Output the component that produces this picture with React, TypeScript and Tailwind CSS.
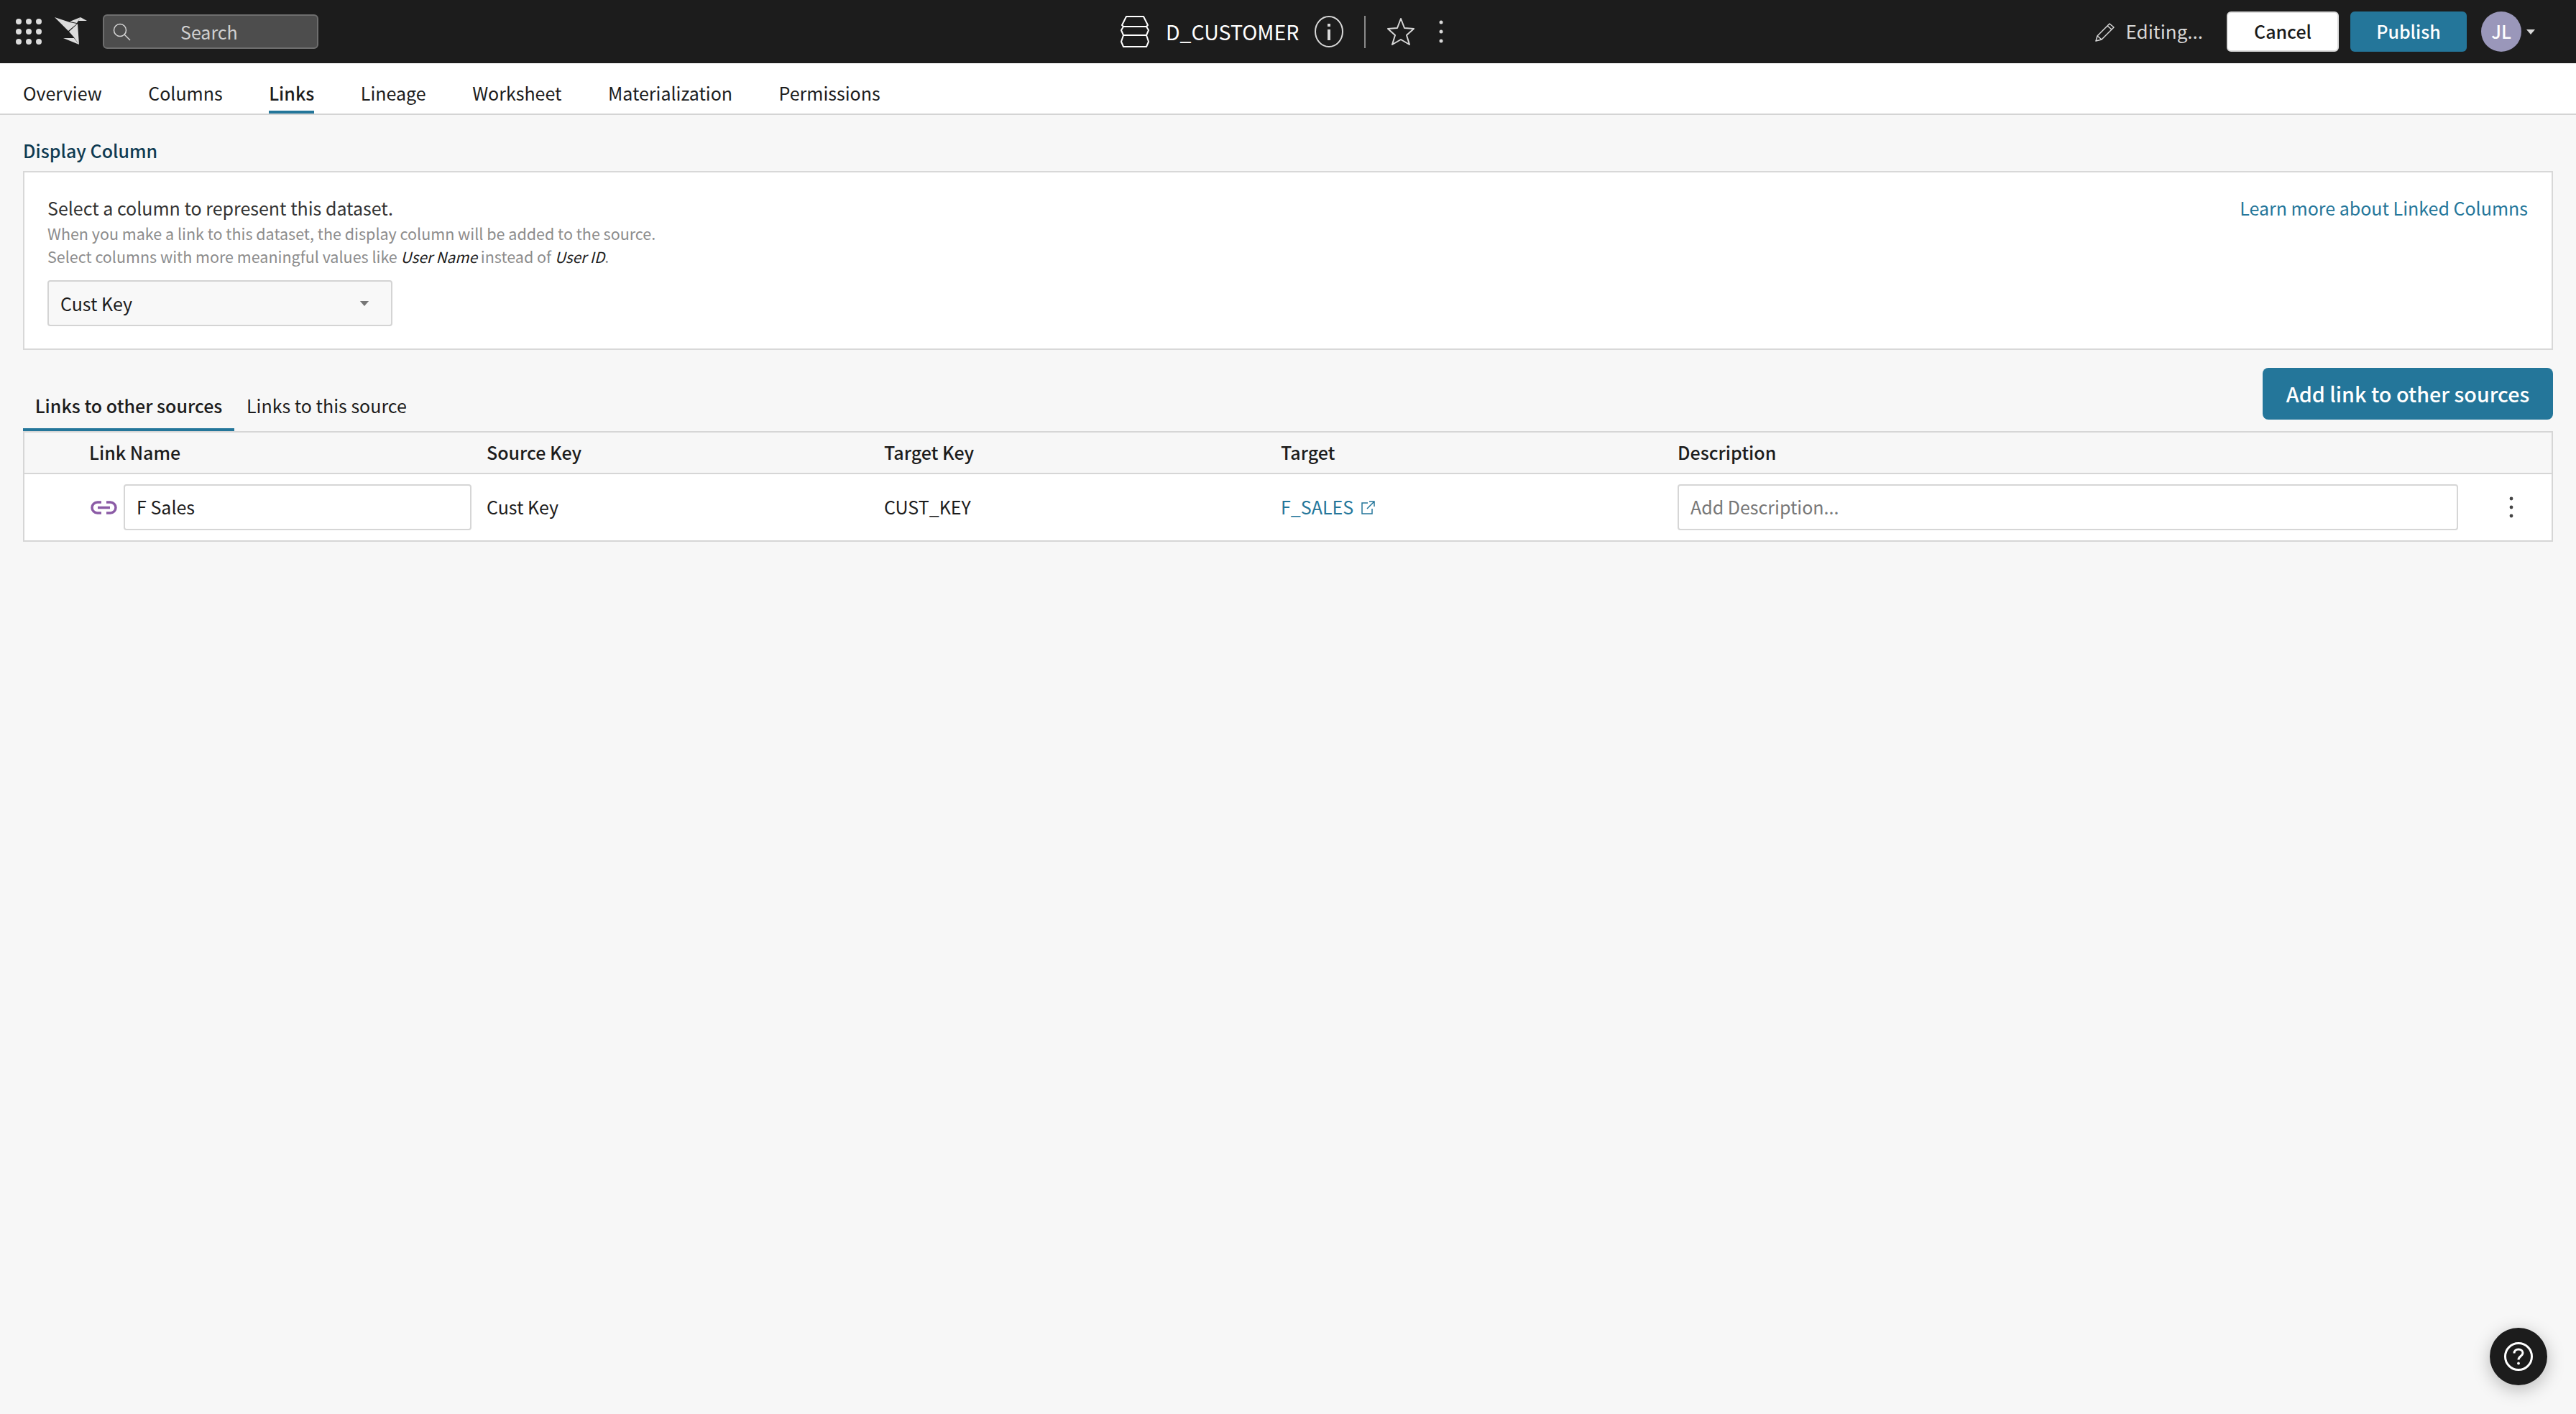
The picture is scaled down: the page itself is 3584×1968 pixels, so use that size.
import React from "react";

const Caret = ({ className }: { className: string }) => (
  <svg className={className} viewBox="0 0 14 8" width="14" height="8"><path d="M0 0h14L7 8z" fill="currentColor" /></svg>
);

const tabs = ["Overview", "Columns", "Links", "Lineage", "Worksheet", "Materialization", "Permissions"];

function TopBar() {
  return (
    <header className="relative flex h-[88px] shrink-0 items-center justify-between bg-[#1c1c1c]">
      <div className="flex items-center">
        <svg className="ml-[22px]" width="36" height="36" viewBox="0 0 36 36" fill="#dcdcdc">
          {[4, 18, 32].map((y) => [4, 18, 32].map((x) => <circle key={`${x}-${y}`} cx={x} cy={y} r="4" />))}
        </svg>
        <svg className="ml-[18px]" width="46" height="40" viewBox="0 0 46 40" fill="#dcdcdc">
          <path d="M0 0 21 7 31 9 19 19Z" />
          <path d="M21 6 36 0 31 8Z" />
          <path d="M36 0 45 5 33 5Z" />
          <path d="M20 20 32 9 34 38 27 28Z" />
          <path d="M12 29 27 29 34 38Z" />
        </svg>
        <div className="ml-[21px] flex h-[48px] w-[300px] items-center rounded-md border-2 border-[#6e6e6e] bg-[#4d4d4d] pl-3">
          <svg width="25" height="25" viewBox="0 0 25 25" fill="none" stroke="#d6d6d6" strokeWidth="1.5"><circle cx="10" cy="10" r="8.5" /><path d="m16 16 8 8" /></svg>
          <span className="ml-[69px] text-[25px] leading-none text-[#d0d0d0]">Search</span>
        </div>
      </div>
      <div className="absolute left-[1559px] top-0 flex h-[88px] items-center">
        <svg width="40" height="44" viewBox="0 0 40 44" fill="none" stroke="#fff" strokeWidth="2">
          <path d="M8 1h24l6 12-2 2H4l-2-2zM4 15l-3 5 3 7h32l3-7-3-5M4 27l-3 9 3 7h32l3-7-3-9" strokeLinejoin="round" />
        </svg>
        <span className="ml-[23px] text-[28.500px] leading-none text-white">D_CUSTOMER</span>
        <svg className="ml-[22px]" width="40" height="44" viewBox="0 0 40 44" fill="none"><ellipse cx="20" cy="22" rx="19" ry="21" stroke="#d8d8d8" strokeWidth="2" /><rect x="18" y="19" width="4" height="15" fill="#d8d8d8" /><rect x="18" y="11" width="4" height="4" fill="#d8d8d8" /></svg>
        <div className="ml-[29px] h-[45px] w-[2px] bg-[#8a8a8a]" />
        <svg className="ml-[30px]" width="38" height="40" viewBox="0 0 38 40" fill="none" stroke="#d8d8d8" strokeWidth="2"><path d="M19 2l5 13 13 1-10 9 4 13-12-7-12 7 4-13L1 16l13-1z" strokeLinejoin="round" /></svg>
        <svg className="ml-[33px]" width="8" height="36" viewBox="0 0 8 36" fill="#d8d8d8"><circle cx="4" cy="5" r="2.5" /><circle cx="4" cy="18" r="2.5" /><circle cx="4" cy="31" r="2.5" /></svg>
      </div>
      <div className="flex items-center pr-[57px]">
        <svg width="28" height="27" viewBox="0 0 28 27" fill="none" stroke="#d8d8d8" strokeWidth="1.5"><path d="M1 26l2-7L20 2l6 5-17 17zM3 19l6 5M17 5l6 5" strokeLinejoin="round" /></svg>
        <span className="mb-[2px] ml-[15px] text-[26px] leading-none text-[#d8d8d8]">Editing...</span>
        <button className="ml-[33px] h-[56px] w-[156px] rounded-md border-2 border-[#dcdcdc] bg-white text-[25px] font-medium text-[#1c1c1c]">Cancel</button>
        <button className="ml-4 h-[56px] w-[162px] rounded-md bg-[#24769a] text-[25px] font-medium text-white">Publish</button>
        <div className="ml-5 flex h-[56px] w-[56px] items-center justify-center rounded-full bg-[#9a97ba] text-[25px] font-medium text-white">JL</div>
        <Caret className="ml-[7px] h-[7px] w-3 text-[#d8d8d8]" />
      </div>
    </header>
  );
}

function Cell({ w, children, className = "" }: { w: string; children: React.ReactNode; className?: string }) {
  return <div className={`${w} flex shrink-0 items-center ${className}`}>{children}</div>;
}

export default function App() {
  return (
    <div className="relative flex h-[1968px] w-[3584px] flex-col overflow-hidden bg-[#f7f7f7] text-[25px] text-[#1c1c1c] [font-family:'Noto_Sans_CJK_JP','Noto_Sans',sans-serif]">
      <TopBar />
      <nav className="flex h-[72px] shrink-0 items-stretch gap-[64.500px] border-b-2 border-[#d4d4d4] bg-white px-8">
        {tabs.map((t) => (
          <div key={t} className={`flex items-center border-b-4 pt-4 leading-none ${t === "Links" ? "border-[#24769a] font-medium" : "border-transparent"}`}>{t}</div>
        ))}
      </nav>

      <main className="flex flex-col px-8">
        <h2 className="mt-[30px] h-[48px] font-medium leading-[38px] text-[#0f3b52]">Display Column</h2>
        <section className="flex h-[249px] justify-between border-2 border-[#d8d8d8] bg-white pl-8 pr-[33px]">
          <div className="flex flex-col">
            <p className="mt-[31px] leading-[36px] text-[#333]">Select a column to represent this dataset.</p>
            <p className="mt-[2px] text-[21.500px] leading-[32px] text-[#8c8c8c]">When you make a link to this dataset, the display column will be added to the source.</p>
            <p className="text-[21.500px] leading-[32px] text-[#8c8c8c]">
              Select columns with more meaningful values like <em className="text-[20.800px] text-[#1c1c1c]">User Name</em> instead of <em className="text-[20.800px] text-[#1c1c1c]">User ID</em>.
            </p>
            <div className="mt-[17px] flex h-[64px] w-[480px] items-center justify-between rounded border-2 border-[#d4d4d4] bg-[#f8f8f8] pl-4 pr-[30px]">
              <span className="leading-none">Cust Key</span>
              <Caret className="h-[7px] w-[14px] text-[#777]" />
            </div>
          </div>
          <a className="mt-[31px] leading-[36px] text-[#24769a]">Learn more about Linked Columns</a>
        </section>

        <div className="mt-[25px] flex h-[88px] items-start justify-between">
          <div className="flex h-[88px] items-stretch">
            <div className="flex w-[294px] items-center justify-center border-b-4 border-[#24769a] pt-[20px] font-medium leading-none">Links to other sources</div>
            <div className="ml-[17px] flex items-center pt-[16px] leading-none">Links to this source</div>
          </div>
          <button className="h-[72px] w-[404px] rounded-lg bg-[#24769a] text-[28.700px] font-medium text-white">Add link to other sources</button>
        </div>

        <section className="border-2 border-[#d6d6d6]">
          <div className="flex h-[58px] items-center border-b-2 border-[#d6d6d6] font-medium">
            <Cell w="w-[643px]" className="pl-[90px]">Link Name</Cell>
            <Cell w="w-[553px]">Source Key</Cell>
            <Cell w="w-[552px]">Target Key</Cell>
            <Cell w="w-[552px]">Target</Cell>
            <Cell w="w-[552px]">Description</Cell>
          </div>
          <div className="flex h-[92px] items-center bg-white">
            <Cell w="w-[643px]" className="pl-[92px]">
              <svg width="37" height="19" viewBox="0 0 37 19" fill="none" stroke="#8b5ba6" strokeWidth="3.5"><path d="M15 2H9.500a7.500 7.500 0 0 0 0 15H15M22 2h5.500a7.500 7.500 0 0 1 0 15H22M10 9.500h17" /></svg>
              <div className="ml-[9px] flex h-[64px] w-[484px] items-center rounded border-2 border-[#d6d6d6] bg-white pl-4">F Sales</div>
            </Cell>
            <Cell w="w-[553px]">Cust Key</Cell>
            <Cell w="w-[552px]">CUST_KEY</Cell>
            <Cell w="w-[552px]" className="text-[#24769a]">
              F_SALES
              <svg className="ml-[11px]" width="19" height="19" viewBox="0 0 19 19" fill="none" stroke="#24769a" strokeWidth="1.5"><path d="M9 3H1v15h14v-7M8 11 18 1M11 1h7v7" /></svg>
            </Cell>
            <Cell w="w-[1216px]">
              <div className="flex h-[64px] flex-1 items-center rounded border-2 border-[#d6d6d6] bg-white pl-4 text-[#777]">Add Description...</div>
              <svg className="ml-[71px] mr-[53px]" width="6" height="30" viewBox="0 0 6 30" fill="#444"><circle cx="3" cy="3" r="2.400" /><circle cx="3" cy="15" r="2.400" /><circle cx="3" cy="27" r="2.400" /></svg>
            </Cell>
          </div>
        </section>
      </main>

      <button className="absolute left-[3464px] top-[1848px] flex h-20 w-20 items-center justify-center rounded-full bg-[#1c1c1c] shadow-[0_6px_24px_rgba(0,0,0,0.25)]">
        <svg width="40" height="40" viewBox="0 0 40 40" fill="none" stroke="#fff" strokeWidth="3"><circle cx="20" cy="20" r="18.500" /><path d="M14 15.500c0-3.500 2.600-5.500 6-5.500s6 2 6 5c0 4.500-6 4.500-6 9.500" /><circle cx="20" cy="29.500" r="1.500" fill="#fff" strokeWidth="1" /></svg>
      </button>
    </div>
  );
}
